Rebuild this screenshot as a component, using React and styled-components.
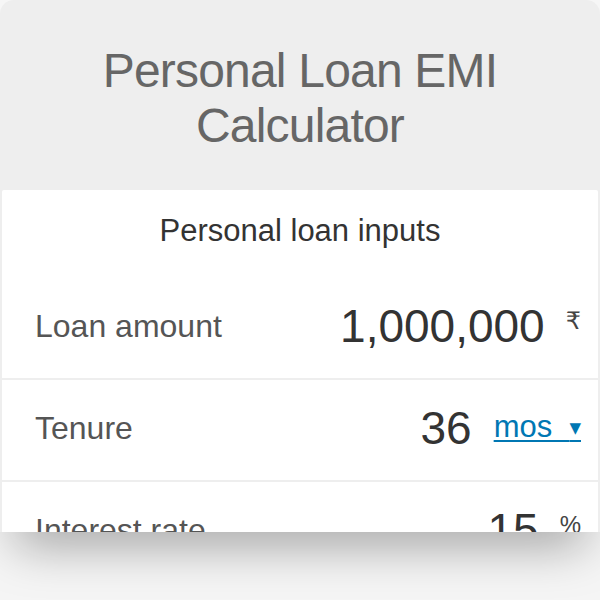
import React from "react";
import styled, { createGlobalStyle } from "styled-components";

const Global = createGlobalStyle`
  html, body { margin: 0; padding: 0; background: #f6f6f6; }
  body { font-family: "Liberation Sans", Arial, sans-serif; }
  * { box-sizing: border-box; }
`;

const Page = styled.div`
  width: 600px;
  height: 600px;
  display: flex;
  flex-direction: column;
  overflow: hidden;
`;

const Frame = styled.div`
  height: 532px;
  background: #eeeeee;
  border-radius: 14px 14px 0 0;
  padding: 0 2px;
  display: flex;
  flex-direction: column;
  overflow: hidden;
`;

const Header = styled.header`
  height: 190px;
  flex: none;
  padding-top: 43px;
  text-align: center;
`;

const Title = styled.h1`
  margin: 0 auto;
  width: 440px;
  font-family: "Liberation Sans", Arial, sans-serif;
  font-weight: 400;
  font-size: 48px;
  letter-spacing: -0.8px;
  line-height: 55px;
  color: #666666;
`;

const Card = styled.section`
  flex: 1;
  background: #ffffff;
  border-radius: 2px 2px 0 0;
`;

const CardHeading = styled.h2`
  margin: 0;
  height: 88px;
  padding-top: 25px;
  text-align: center;
  font-weight: 400;
  font-size: 31px;
  line-height: 31px;
  color: #333333;
`;

const Row = styled.div`
  height: 102px;
  display: flex;
  align-items: center;
  padding: 0 17px 0 33px;
  border-bottom: 2px solid #eeeeee;
`;

const Label = styled.span`
  flex: 1;
  font-size: 32px;
  line-height: 1;
  padding-bottom: 5px;
  color: #555555;
`;

const Value = styled.span`
  font-size: 46px;
  line-height: 1;
  padding-bottom: 4px;
  color: #333333;
`;

const Unit = styled.span`
  margin-left: 21px;
  font-family: "Liberation Sans", "DejaVu Sans", sans-serif;
  font-size: 24px;
  line-height: 1;
  color: #444444;
  align-self: flex-start;
  margin-top: 31px;
`;

const UnitSelect = styled.span`
  margin-left: 22px;
  font-size: 31px;
  line-height: 1;
  padding-bottom: 8px;
  color: #0077b3;
  text-decoration: underline;
  text-decoration-thickness: 2px;
  text-underline-offset: 3px;
  white-space: pre;
`;

const Caret = styled.span`
  font-family: "DejaVu Sans", sans-serif;
  font-size: 15px;
  vertical-align: 4px;
`;

const Footer = styled.div`
  flex: 1;
  background: #f5f5f5;
  position: relative;
  overflow: hidden;
  &::before {
    content: "";
    position: absolute;
    left: 25px;
    right: 25px;
    top: -30px;
    height: 30px;
    box-shadow: 0 2px 50px 10px rgba(0, 0, 0, 0.36);
  }
`;

export default function App() {
  return (
    <>
      <Global />
      <Page>
        <Frame>
          <Header>
            <Title>Personal Loan EMI Calculator</Title>
          </Header>
          <Card>
            <CardHeading>Personal loan inputs</CardHeading>
            <Row>
              <Label>Loan amount</Label>
              <Value>1,000,000</Value>
              <Unit>₹</Unit>
            </Row>
            <Row>
              <Label>Tenure</Label>
              <Value>36</Value>
              <UnitSelect>
                mos  <Caret>▼</Caret>
              </UnitSelect>
            </Row>
            <Row>
              <Label>Interest rate</Label>
              <Value>15</Value>
              <Unit>%</Unit>
            </Row>
          </Card>
        </Frame>
        <Footer />
      </Page>
    </>
  );
}
